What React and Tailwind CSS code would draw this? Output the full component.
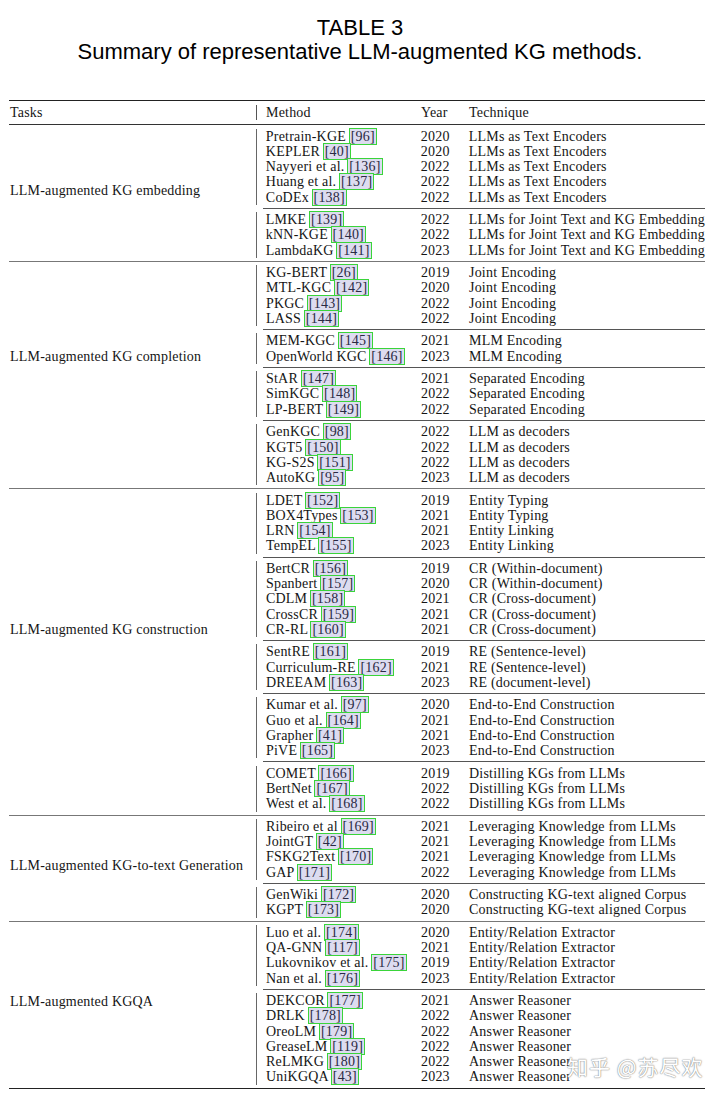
import React from 'react';

const GROUPS = [
  {
    task: 'LLM-augmented KG embedding',
    lift: 'pb-[6px]',
    subs: [
      [
        ['Pretrain-KGE', 96, 2020, 'LLMs as Text Encoders'],
        ['KEPLER', 40, 2020, 'LLMs as Text Encoders'],
        ['Nayyeri et al.', 136, 2022, 'LLMs as Text Encoders'],
        ['Huang et al.', 137, 2022, 'LLMs as Text Encoders'],
        ['CoDEx', 138, 2022, 'LLMs as Text Encoders'],
      ],
      [
        ['LMKE', 139, 2022, 'LLMs for Joint Text and KG Embedding'],
        ['kNN-KGE', 140, 2022, 'LLMs for Joint Text and KG Embedding'],
        ['LambdaKG', 141, 2023, 'LLMs for Joint Text and KG Embedding'],
      ],
    ],
  },
  {
    task: 'LLM-augmented KG completion',
    lift: 'pb-[37px]',
    subs: [
      [
        ['KG-BERT', 26, 2019, 'Joint Encoding'],
        ['MTL-KGC', 142, 2020, 'Joint Encoding'],
        ['PKGC', 143, 2022, 'Joint Encoding'],
        ['LASS', 144, 2022, 'Joint Encoding'],
      ],
      [
        ['MEM-KGC', 145, 2021, 'MLM Encoding'],
        ['OpenWorld KGC', 146, 2023, 'MLM Encoding'],
      ],
      [
        ['StAR', 147, 2021, 'Separated Encoding'],
        ['SimKGC', 148, 2022, 'Separated Encoding'],
        ['LP-BERT', 149, 2022, 'Separated Encoding'],
      ],
      [
        ['GenKGC', 98, 2022, 'LLM as decoders'],
        ['KGT5', 150, 2022, 'LLM as decoders'],
        ['KG-S2S', 151, 2022, 'LLM as decoders'],
        ['AutoKG', 95, 2023, 'LLM as decoders'],
      ],
    ],
  },
  {
    task: 'LLM-augmented KG construction',
    lift: 'pb-[45px]',
    subs: [
      [
        ['LDET', 152, 2019, 'Entity Typing'],
        ['BOX4Types', 153, 2021, 'Entity Typing'],
        ['LRN', 154, 2021, 'Entity Linking'],
        ['TempEL', 155, 2023, 'Entity Linking'],
      ],
      [
        ['BertCR', 156, 2019, 'CR (Within-document)'],
        ['Spanbert', 157, 2020, 'CR (Within-document)'],
        ['CDLM', 158, 2021, 'CR (Cross-document)'],
        ['CrossCR', 159, 2021, 'CR (Cross-document)'],
        ['CR-RL', 160, 2021, 'CR (Cross-document)'],
      ],
      [
        ['SentRE', 161, 2019, 'RE (Sentence-level)'],
        ['Curriculum-RE', 162, 2021, 'RE (Sentence-level)'],
        ['DREEAM', 163, 2023, 'RE (document-level)'],
      ],
      [
        ['Kumar et al.', 97, 2020, 'End-to-End Construction'],
        ['Guo et al.', 164, 2021, 'End-to-End Construction'],
        ['Grapher', 41, 2021, 'End-to-End Construction'],
        ['PiVE', 165, 2023, 'End-to-End Construction'],
      ],
      [
        ['COMET', 166, 2019, 'Distilling KGs from LLMs'],
        ['BertNet', 167, 2022, 'Distilling KGs from LLMs'],
        ['West et al.', 168, 2022, 'Distilling KGs from LLMs'],
      ],
    ],
  },
  {
    task: 'LLM-augmented KG-to-text Generation',
    lift: 'pb-[6px]',
    subs: [
      [
        ['Ribeiro et al', 169, 2021, 'Leveraging Knowledge from LLMs'],
        ['JointGT', 42, 2021, 'Leveraging Knowledge from LLMs'],
        ['FSKG2Text', 170, 2021, 'Leveraging Knowledge from LLMs'],
        ['GAP', 171, 2022, 'Leveraging Knowledge from LLMs'],
      ],
      [
        ['GenWiki', 172, 2020, 'Constructing KG-text aligned Corpus'],
        ['KGPT', 173, 2020, 'Constructing KG-text aligned Corpus'],
      ],
    ],
  },
  {
    task: 'LLM-augmented KGQA',
    lift: 'pb-[6px]',
    subs: [
      [
        ['Luo et al.', 174, 2020, 'Entity/Relation Extractor'],
        ['QA-GNN', 117, 2021, 'Entity/Relation Extractor'],
        ['Lukovnikov et al.', 175, 2019, 'Entity/Relation Extractor'],
        ['Nan et al.', 176, 2023, 'Entity/Relation Extractor'],
      ],
      [
        ['DEKCOR', 177, 2021, 'Answer Reasoner'],
        ['DRLK', 178, 2022, 'Answer Reasoner'],
        ['OreoLM', 179, 2022, 'Answer Reasoner'],
        ['GreaseLM', 119, 2022, 'Answer Reasoner'],
        ['ReLMKG', 180, 2022, 'Answer Reasoner'],
        ['UniKGQA', 43, 2023, 'Answer Reasoner'],
      ],
    ],
  },
];

function Cite({ n }) {
  return (
    <span className="bg-[#dddcf0] text-[#2a2a44] outline-[1.5px] outline-solid outline-[#3ad43a] px-[1px]">
      [{n}]
    </span>
  );
}

function Row({ row }) {
  const [name, n, year, tech] = row;
  return (
    <div className="flex h-[15.25px] leading-[15.25px] whitespace-nowrap">
      <div className="w-[155px]">
        {name} <Cite n={n} />
      </div>
      <div className="w-[48px]">{year}</div>
      <div>{tech}</div>
    </div>
  );
}

export default function App() {
  return (
    <div className="relative w-[720px] h-[1096px] bg-white text-[#151515] overflow-hidden">
      {/* Caption */}
      <div className="pt-[16px] text-center text-[22px] leading-[24px] text-black font-['Liberation_Sans',Arial,sans-serif]">
        <div>TABLE 3</div>
        <div>Summary of representative LLM-augmented KG methods.</div>
      </div>

      <div className="ml-[9px] mt-[36px] w-[696px] text-[14px] tracking-[0.2px] font-['Liberation_Serif','Times_New_Roman',serif]">
        <div className="border-t-[1.5px] border-[#222]" />
        {/* Header */}
        <div className="flex py-[4px] border-b border-[#333]">
          <div className="w-[247px] pl-[1px] leading-[15.25px]">Tasks</div>
          <div className="border-l border-[#555] pl-[9px] flex leading-[15.25px]">
            <div className="w-[155px]">Method</div>
            <div className="w-[48px]">Year</div>
            <div>Technique</div>
          </div>
        </div>

        {GROUPS.map((g, gi) => (
          <div key={g.task} className={gi > 0 ? 'border-t border-[#777]' : ''}>
            <div className="flex">
              <div className={`w-[247px] pl-[1px] flex items-center ${g.lift}`}>{g.task}</div>
              <div className="flex-1 flex flex-col">
                {g.subs.map((sub, si) => (
                  <div key={si}>
                    {si > 0 && <div className="ml-[7px] border-t border-[#555]" />}
                    <div className="pt-[3.3px] pb-[3px]">
                      <div className="border-l border-[#666] pl-[9px]">
                        {sub.map((r) => (
                          <Row key={r[0]} row={r} />
                        ))}
                      </div>
                    </div>
                  </div>
                ))}
              </div>
            </div>
          </div>
        ))}
        <div className="border-t-[1.5px] border-[#222]" />
      </div>

      {/* Watermark */}
      <div className="absolute left-[567px] top-[1051px] text-[21px] tracking-[1px] text-white font-['Noto_Sans_CJK_SC',sans-serif] [text-shadow:0_0_1.5px_#777,0_0_1px_#999]">
        知乎 @苏尽欢
      </div>
    </div>
  );
}
